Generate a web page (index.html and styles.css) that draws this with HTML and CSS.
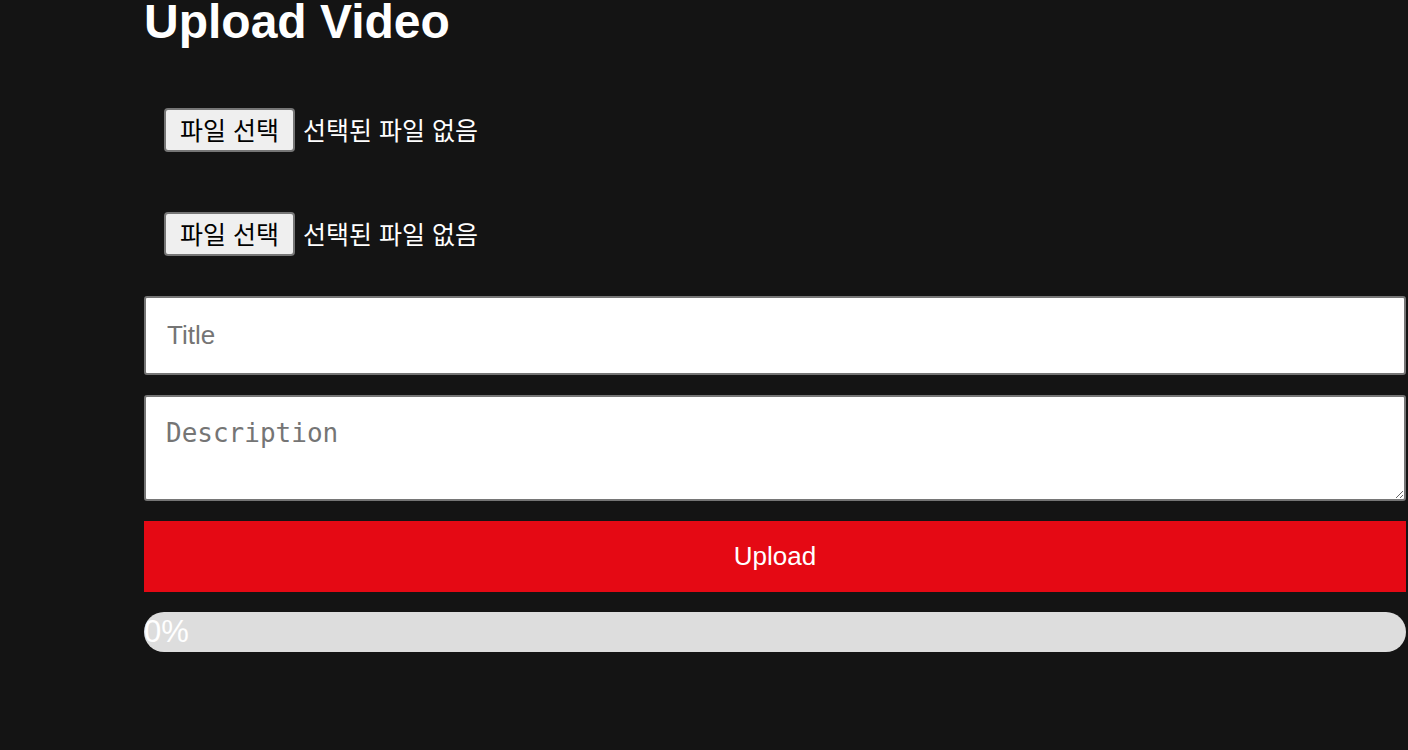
FILE: index.html
```html
<!DOCTYPE html>
<html lang="ko">
<head>
<meta charset="utf-8">
<title>Upload Video</title>
<link rel="stylesheet" href="styles.css">
</head>
<body>
<main class="page">
  <h1 class="heading">Upload Video</h1>
  <form class="upload-form">
    <label class="file-picker">
      <input class="file-native" type="file" accept="video/*">
      <span class="file-button">파일 선택</span>
      <span class="file-status">선택된 파일 없음</span>
    </label>
    <label class="file-picker">
      <input class="file-native" type="file" accept="image/*">
      <span class="file-button">파일 선택</span>
      <span class="file-status">선택된 파일 없음</span>
    </label>
    <input class="text-input" type="text" placeholder="Title">
    <textarea class="text-area" placeholder="Description"></textarea>
    <button class="upload-button" type="button">Upload</button>
    <div class="progress">
      <div class="progress-fill" style="width: 0%">0%</div>
    </div>
  </form>
</main>
</body>
</html>
```

FILE: styles.css
```css
html, body {
  margin: 0;
  padding: 0;
  background: #141414;
  overflow: hidden;
}

body {
  font-family: "Liberation Sans", Arial, "Noto Sans CJK KR", sans-serif;
  color: #ffffff;
}

.page {
  margin-left: 144px;
  width: 1262px;
}

.heading {
  margin: -6px 0 39px 0;
  font-size: 48px;
  font-weight: bold;
  line-height: 55px;
}

.upload-form {
  display: flex;
  flex-direction: column;
  gap: 20px;
}

.file-picker {
  margin: 20px 0 20px 20px;
  display: flex;
  align-items: center;
  gap: 8px;
  height: 44px;
  font-family: "Noto Sans CJK KR", sans-serif;
  font-size: 25px;
  line-height: 1;
  cursor: pointer;
}

.file-native {
  display: none;
}

.file-button {
  box-sizing: border-box;
  height: 44px;
  display: flex;
  align-items: center;
  padding: 0 14px 1px 14px;
  border: 2px solid #767676;
  border-radius: 4px;
  background: #efefef;
  color: #000000;
}

.file-status {
  color: #ffffff;
  padding-bottom: 1px;
}

.text-input,
.text-area {
  box-sizing: border-box;
  width: 100%;
  margin: 0;
  border: 2px solid #767676;
  border-radius: 3px;
  background: #ffffff;
  color: #000000;
  padding: 0 20px 0 21px;
  font-size: 26px;
}

.text-input {
  height: 79px;
  font-family: "Liberation Sans", Arial, sans-serif;
}

.text-area {
  height: 106px;
  padding: 21px 20px 20px 20px;
  font-family: "DejaVu Sans Mono", monospace;
  line-height: 30px;
  display: block;
}

.text-input::placeholder,
.text-area::placeholder {
  color: #757575;
}

.upload-button {
  height: 71px;
  border: none;
  background: #e50914;
  color: #ffffff;
  font-family: "Liberation Sans", Arial, sans-serif;
  font-size: 26px;
  padding: 0;
  cursor: pointer;
}

.progress {
  height: 40px;
  background: #dddddd;
  border-radius: 20px;
  overflow: hidden;
}

.progress-fill {
  height: 40px;
  line-height: 40px;
  font-size: 31px;
  color: #ffffff;
  white-space: nowrap;
  background: #e50914;
}
```
